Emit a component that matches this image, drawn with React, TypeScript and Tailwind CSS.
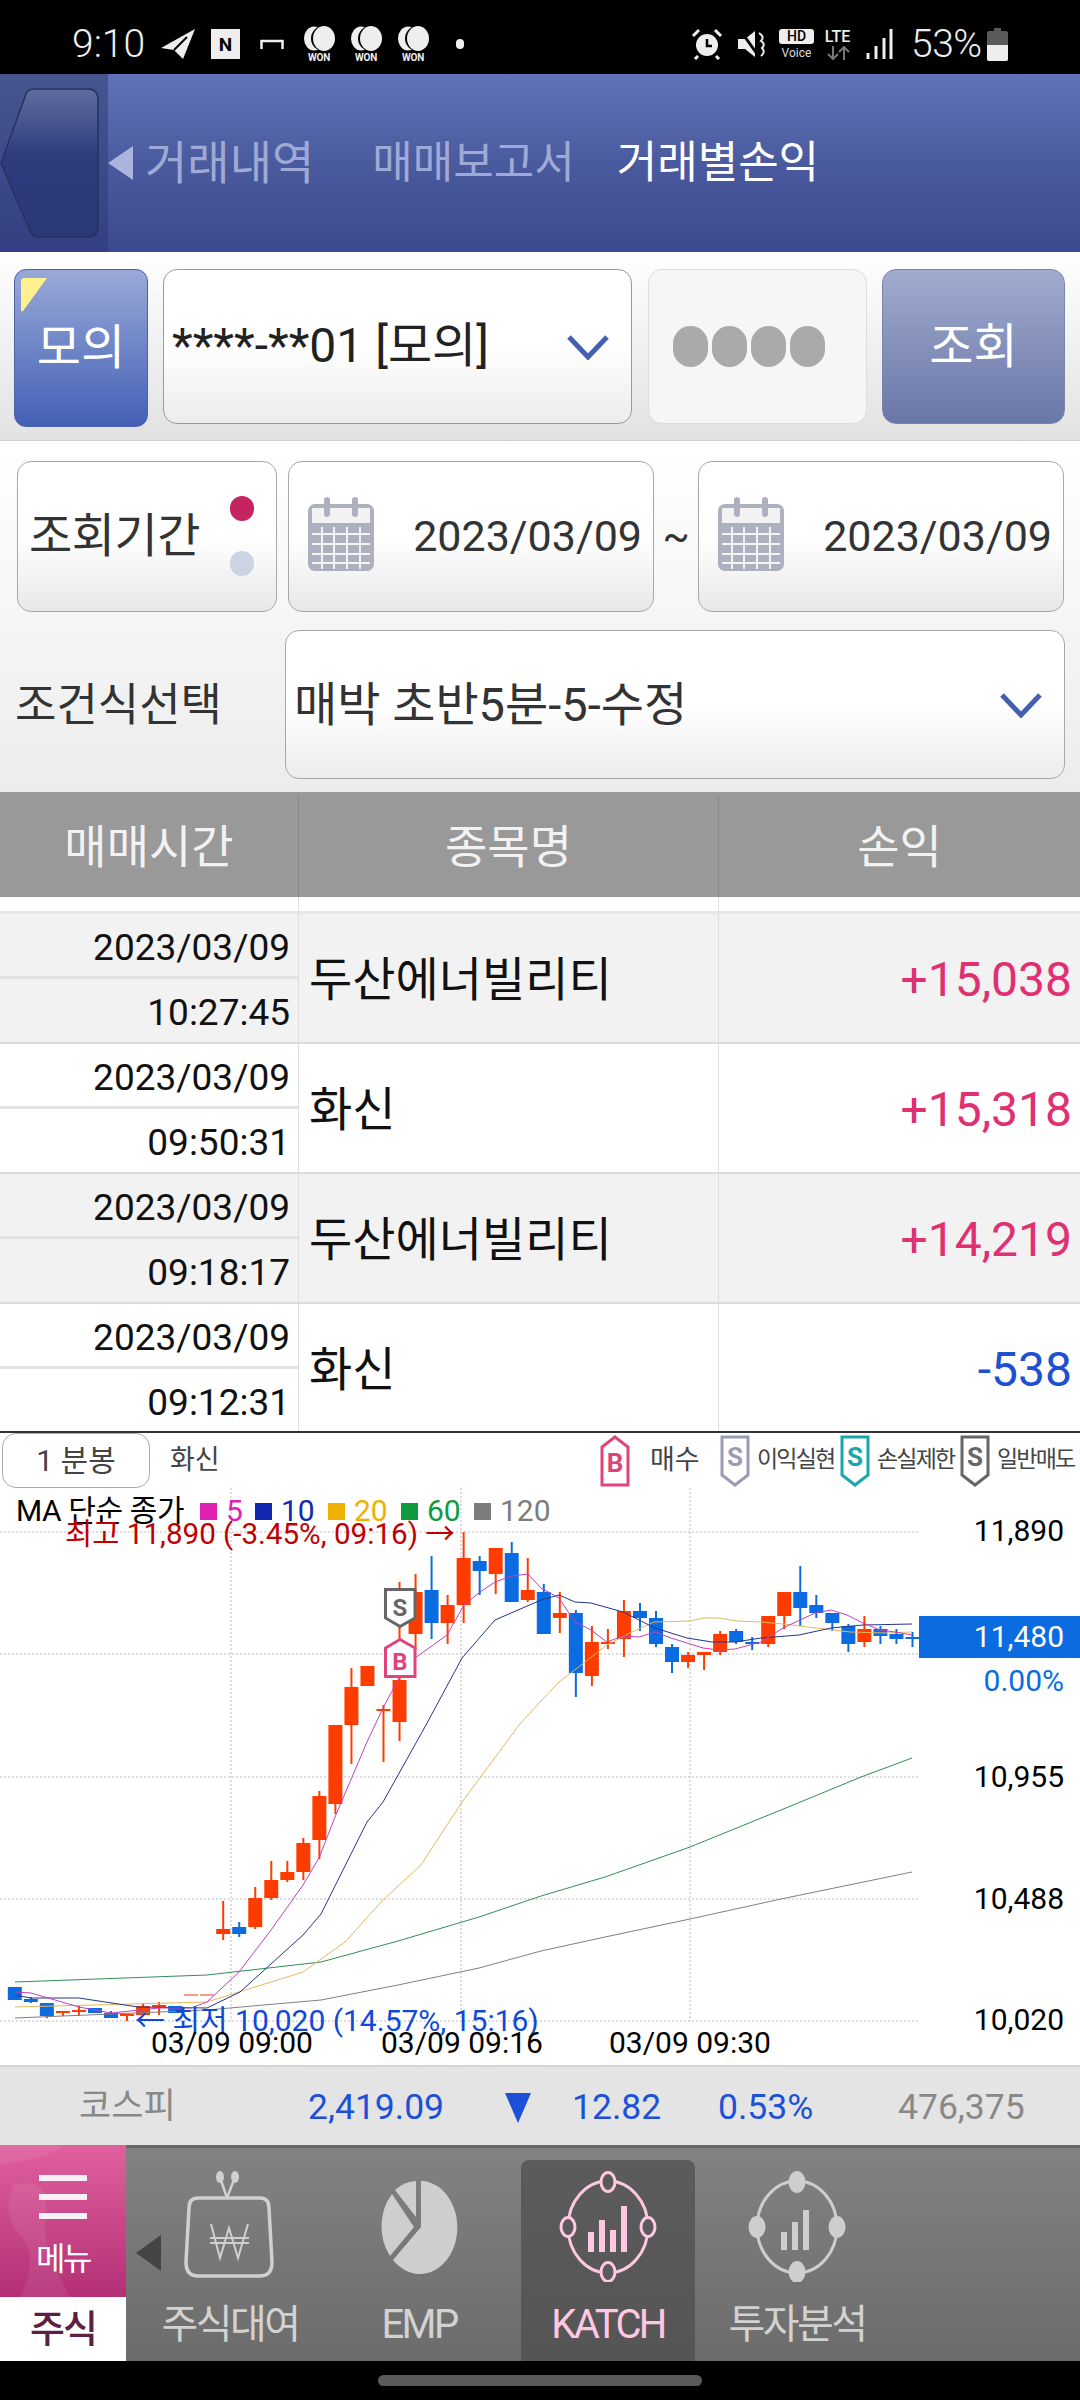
import React from "react";

type C = [number, number, number, number, number, "r" | "b"]; // n, bodyTop, bodyBottom, wickTop, wickBottom, color
const candles: C[] = [
  [0, 1987, 2000, 1987, 2000, "b"], [1, 1999, 2002, 1997, 2003, "b"], [2, 2003, 2016, 2003, 2018, "b"], [3, 2011, 2013, 2011, 2016, "r"],
  [4, 2010, 2012, 2006, 2016, "r"], [5, 2008, 2013, 2008, 2013, "b"], [6, 2013, 2018, 2011, 2018, "b"], [7, 2014, 2016, 2014, 2021, "r"],
  [8, 2006, 2015, 2003, 2015, "r"], [9, 2005, 2006, 2002, 2015, "r"], [10, 2006, 2013, 2006, 2013, "b"],
  [13, 1929, 1934, 1901, 1940, "r"], [14, 1927, 1934, 1922, 1937, "b"], [15, 1898, 1927, 1887, 1929, "r"], [16, 1880, 1898, 1861, 1900, "r"],
  [17, 1872, 1880, 1861, 1882, "r"], [18, 1843, 1872, 1838, 1880, "r"], [19, 1796, 1840, 1791, 1859, "r"], [20, 1725, 1804, 1725, 1814, "r"],
  [21, 1687, 1725, 1668, 1764, "r"], [22, 1666, 1686, 1666, 1686, "r"], [23, 1709, 1711, 1705, 1762, "r"], [24, 1680, 1722, 1582, 1741, "r"],
  [25, 1592, 1634, 1574, 1650, "r"], [26, 1590, 1623, 1556, 1639, "b"], [27, 1605, 1623, 1595, 1644, "r"], [28, 1558, 1605, 1532, 1623, "r"],
  [29, 1561, 1571, 1556, 1595, "b"], [30, 1548, 1574, 1548, 1594, "r"], [31, 1553, 1602, 1542, 1602, "b"], [32, 1590, 1600, 1558, 1602, "r"],
  [33, 1592, 1634, 1584, 1634, "b"], [34, 1613, 1618, 1592, 1633, "r"], [35, 1613, 1673, 1610, 1697, "b"], [36, 1642, 1676, 1626, 1686, "r"],
  [37, 1642, 1643, 1629, 1649, "r"], [38, 1611, 1639, 1600, 1657, "r"], [39, 1611, 1618, 1603, 1631, "b"], [40, 1618, 1644, 1611, 1647, "b"],
  [41, 1647, 1662, 1644, 1673, "b"], [42, 1655, 1662, 1652, 1668, "r"], [43, 1652, 1655, 1652, 1670, "r"], [44, 1634, 1652, 1631, 1655, "r"],
  [45, 1631, 1642, 1629, 1644, "b"], [46, 1642, 1644, 1637, 1650, "b"], [47, 1616, 1644, 1616, 1647, "r"], [48, 1592, 1616, 1592, 1629, "r"],
  [49, 1592, 1608, 1566, 1626, "b"], [50, 1605, 1613, 1595, 1618, "b"], [51, 1613, 1623, 1613, 1631, "b"], [52, 1626, 1644, 1624, 1652, "b"],
  [53, 1629, 1642, 1616, 1647, "r"], [54, 1629, 1636, 1626, 1644, "b"], [55, 1634, 1639, 1629, 1644, "b"], [56, 1637, 1638, 1632, 1647, "b"],
];

const ma60 = "15,1982 207,1975 321,1962 398,1941 479,1917 541,1896 605,1877 690,1847 781,1810 861,1777 912,1758";
const ma120 = "15,2018 207,2010 321,2000 398,1985 479,1968 541,1951 605,1937 690,1919 781,1899 912,1872";
const ma20 = "15,2007 207,2002 303,1972 345,1942 383,1900 421,1865 462,1802 497,1755 519,1725 541,1701 559,1682 607,1645 630,1633 654,1622 690,1621 704,1618 719,1618 737,1621 761,1622 783,1624 816,1628 850,1632 885,1633 912,1632";
const ma10 = "15,1995 31,1998 79,1998 138,2007 207,2008 240,1992 303,1935 321,1914 367,1822 383,1802 426,1725 462,1658 495,1620 541,1600 559,1595 575,1602 591,1603 623,1612 655,1628 687,1638 712,1642 735,1642 761,1638 799,1635 831,1628 863,1625 912,1624";
const ma5 = "15,1992 31,1993 79,2007 111,2013 159,2008 191,2008 207,2002 239,1972 271,1930 303,1885 319,1858 335,1817 367,1742 383,1708 399,1678 415,1658 447,1635 464,1605 480,1592 495,1582 512,1576 528,1574 541,1588 559,1598 575,1622 591,1630 607,1642 623,1636 639,1637 655,1632 671,1638 703,1648 719,1650 735,1649 761,1642 783,1628 815,1613 831,1610 847,1615 863,1623 880,1630 895,1632 912,1635";

function Chevron() {
  return (
    <svg width="44" height="26" viewBox="0 0 44 26" className="shrink-0">
      <path d="M3 3 L22 23 L41 3" fill="none" stroke="#4560ae" strokeWidth="5" />
    </svg>
  );
}

function Calendar() {
  return (
    <svg width="66" height="74" viewBox="0 0 66 74" className="shrink-0">
      <rect x="0" y="7" width="66" height="67" rx="7" fill="#adb1bf" />
      <rect x="4" y="11" width="58" height="15" fill="#f2f2f2" />
      <rect x="16" y="0" width="6" height="20" rx="3" fill="#adb1bf" />
      <rect x="44" y="0" width="6" height="20" rx="3" fill="#adb1bf" />
      <path d="M4 37H62M4 47H62M4 57H62M4 66H62M14 30V72M26 30V72M39 30V72M52 30V72" stroke="#f4f4f4" strokeWidth="2" />
    </svg>
  );
}

function Won() {
  return (
    <div className="flex flex-col items-center w-[32px] shrink-0">
      <svg width="32" height="25" viewBox="0 0 32 25">
        <ellipse cx="11" cy="12.5" rx="10" ry="12" fill="#eee" />
        <ellipse cx="20" cy="12.5" rx="12" ry="12.5" fill="#000" />
        <ellipse cx="21" cy="12.5" rx="11" ry="12.5" fill="#eee" />
      </svg>
      <span className="text-[10px] leading-[10px] font-bold text-[#eee] mt-[2px] tracking-[-0.3px]">WON</span>
    </div>
  );
}

function Marker({ kind, color }: { kind: "B" | "S"; color: string }) {
  const d = kind === "B" ? "M15 2 L28 12 V50 H2 V12 Z" : "M2 2 H28 V40 L15 50 L2 40 Z";
  return (
    <svg width="30" height="52" viewBox="0 0 30 52" className="shrink-0">
      <path d={d} fill="#fff" stroke={color} strokeWidth="3" />
      <text x="15" y={kind === "B" ? 37 : 31} textAnchor="middle" fontSize="26" fontWeight="700" fill={color} fontFamily="Roboto, sans-serif">{kind}</text>
    </svg>
  );
}

function Swatch({ color, label, cls, box }: { color: string; label: string; cls: string; box: string }) {
  return (
    <div className={`flex items-center gap-[9px] ${box}`}>
      <span className={`w-[17px] h-[17px] shrink-0 ${cls}`} />
      <span style={{ color }}>{label}</span>
    </div>
  );
}

function Row({ date, time, name, val, alt, blue }: { date: string; time: string; name: string; val: string; alt?: boolean; blue?: boolean }) {
  return (
    <div className={`grid grid-cols-[299px_420px_361px] h-[130px] border-b-[2px] border-[#dcdcdc] ${alt ? "bg-[#f2f2f2]" : "bg-white"}`}>
      <div className="flex flex-col border-r border-[#dddddd] text-[37px] text-[#111] text-right">
        <div className="h-[65px] leading-[68px] pr-[8px] border-b-[3px] border-[#e2e2e2]">{date}</div>
        <div className="h-[63px] leading-[68px] pr-[8px]">{time}</div>
      </div>
      <div className="flex items-center pl-[10px] pt-[5px] text-[47px] text-[#111] border-r border-[#dddddd]">{name}</div>
      <div className={`flex items-center justify-end pr-[8px] pt-[4px] text-[48px] ${blue ? "text-[#2050d0]" : "text-[#e03072]"}`}>{val}</div>
    </div>
  );
}

function NavItem({ label, active, children }: { label: string; active?: boolean; children: React.ReactNode }) {
  return (
    <div className={`w-[174px] h-[201px] flex flex-col items-center rounded-t-[8px] pt-[10px] ${active ? "bg-gradient-to-b from-[#5c5c5c] to-[#555555]" : ""}`}>
      <svg width="120" height="112" viewBox="0 0 120 112">{children}</svg>
      <span className={`mt-[14px] text-[40px] leading-[58px] tracking-[-2.6px] ${active ? "text-[#ffc8e2]" : "text-[#d2d2d2]"}`}>{label}</span>
    </div>
  );
}

function Ring({ color, filled }: { color: string; filled?: boolean }) {
  const nodes: [number, number][] = [[60, 12], [60, 102], [20, 57], [100, 57]];
  return (
    <>
      <ellipse cx="60" cy="57" rx="40" ry="46" fill="none" stroke={color} strokeWidth="3" />
      {nodes.map(([x, y], i) => (
        <ellipse key={i} cx={x} cy={y} rx="7" ry="9.5" fill={filled ? color : "#5a5a5a"} stroke={color} strokeWidth="3" />
      ))}
    </>
  );
}

export default function App() {
  return (
    <div className="w-[1080px] h-[2400px] flex flex-col bg-white overflow-hidden font-['Roboto','Noto_Sans_CJK_KR',sans-serif]">
      {/* status bar */}
      <div className="h-[74px] bg-black flex items-center shrink-0 text-[#eeeeee] pt-[14px]">
        <span className="ml-[72px] w-[75px] text-[39px] font-light leading-none">9:10</span>
        <svg width="34" height="30" viewBox="0 0 34 30" className="ml-[14px]"><path d="M34 0 L0 19 L13 21 L22 30 Z" fill="#eee" /><path d="M26 8 L13 21" stroke="#000" strokeWidth="2" /></svg>
        <span className="ml-[16px] w-[29px] h-[30px] bg-[#eee] text-black text-[19px] font-bold flex items-center justify-center leading-none">N</span>
        <svg width="24" height="10" viewBox="0 0 24 10" className="ml-[20px]"><path d="M1.5 10V2H22.5V10" fill="none" stroke="#eee" strokeWidth="2.5" /></svg>
        <div className="ml-[19px] flex gap-[15px]"><Won /><Won /><Won /></div>
        <span className="ml-[27px] w-[8px] h-[10px] rounded-full bg-[#eee]" />
        <svg width="32" height="32" viewBox="0 0 32 32" className="ml-[227px]"><circle cx="16" cy="17" r="11" fill="#eee" /><path d="M16 11V18H21" stroke="#000" strokeWidth="2.5" fill="none" /><path d="M2 8 L8 2M30 8 L24 2M7 28 L4 31M25 28 L28 31" stroke="#eee" strokeWidth="3" /></svg>
        <svg width="30" height="30" viewBox="0 0 30 30" className="ml-[15px]"><path d="M0 10H7L17 2V28L7 20H0Z" fill="#eee" /><path d="M2 1 L22 29" stroke="#000" strokeWidth="3" /><path d="M21 4Q27 8 23 12Q28 15 24 19Q28 23 23 27" fill="none" stroke="#eee" strokeWidth="2" /></svg>
        <div className="ml-[11px] w-[35px] flex flex-col items-center">
          <span className="w-[35px] h-[15px] bg-[#eee] text-black rounded-[3px] text-[14px] leading-[15px] text-center font-medium">HD</span>
          <span className="text-[12px] leading-[14px] mt-[2px] text-[#ddd]">Voice</span>
        </div>
        <div className="ml-[8px] w-[31px] flex flex-col items-center">
          <span className="text-[16px] leading-[15px] font-medium">LTE</span>
          <svg width="24" height="14" viewBox="0 0 24 14" className="mt-[2px]"><path d="M7 0V13M2 8L7 13L12 8" stroke="#777" strokeWidth="2" fill="none" /><path d="M18 14V1M13 6L18 1L23 6" stroke="#777" strokeWidth="2" fill="none" /></svg>
        </div>
        <svg width="27" height="30" viewBox="0 0 27 30" className="ml-[13px]"><path d="M2 24V30M10 17V30M18 9V30M25 0V30" stroke="#eee" strokeWidth="3" /></svg>
        <span className="ml-[18px] w-[70px] text-[39px] font-light leading-none tracking-[-0.5px]">53%</span>
        <svg width="21" height="33" viewBox="0 0 21 33" className="ml-[6px]"><path d="M7 0H14V3H19Q21 3 21 5V31Q21 33 19 33H2Q0 33 0 31V5Q0 3 2 3H7Z" fill="#5a5a5a" /><path d="M0 17H21V31Q21 33 19 33H2Q0 33 0 31Z" fill="#eee" /></svg>
      </div>

      {/* header */}
      <div className="h-[178px] shrink-0 flex bg-gradient-to-b from-[#6072b9] via-[#4a5a9e] to-[#3b4a8c]">
        <div className="w-[108px] h-full flex items-center bg-gradient-to-b from-[#46568f] to-[#333f82]">
          <svg width="100" height="150" viewBox="0 0 100 150">
            <defs>
              <linearGradient id="bk" x1="0" y1="0" x2="0" y2="1"><stop offset="0" stopColor="#5f6c9f" /><stop offset="0.45" stopColor="#2e3c7e" /><stop offset="1" stopColor="#2a3876" /></linearGradient>
            </defs>
            <path d="M1 75 L26 6 Q28 1 34 1 H88 Q98 1 98 12 V138 Q98 149 88 149 H38 Q32 149 30 143 Z" fill="url(#bk)" stroke="#27315f" strokeWidth="1.5" />
          </svg>
        </div>
        <div className="flex items-center h-full text-[#9fa9d5] whitespace-nowrap">
          <span className="w-0 h-0 border-y-[17px] border-y-transparent border-r-[25px] border-r-[#aab4dc]" />
          <span className="ml-[12px] text-[46px] leading-none">거래내역</span>
          <span className="ml-[58px] text-[44px] leading-none">매매보고서</span>
          <span className="ml-[42px] text-[44px] leading-none text-white">거래별손익</span>
        </div>
      </div>

      {/* account row */}
      <div className="h-[189px] shrink-0 border-b border-[#cfcfcf] bg-gradient-to-b from-white to-[#e2e2e2] pl-[14px] pr-[15px] pt-[17px] flex">
        <div className="relative w-[134px] h-[158px] rounded-[12px] bg-gradient-to-b from-[#9aa9d8] to-[#4460b4] border border-[#4a62ae] flex items-center justify-center text-white text-[48px]">
          <svg width="28" height="36" viewBox="0 0 28 36" className="absolute left-[5px] top-[7px]"><path d="M1 5 Q1 1 4 1 H27 L3 34 Q1 36 1 32 Z" fill="#fff28e" /></svg>
          모의
        </div>
        <div className="ml-[15px] w-[469px] h-[155px] rounded-[14px] border border-[#9a9a9a] bg-gradient-to-b from-white via-white to-[#ececec] flex items-center justify-between pl-[8px] pr-[21px] text-[#222] text-[48px]">
          <span className="-mt-[2px] whitespace-nowrap">****-**01 [모의]</span>
          <Chevron />
        </div>
        <div className="ml-[16px] w-[219px] h-[155px] rounded-[14px] border border-[#dddddd] bg-[#f6f6f6] flex items-center pl-[24px]">
          {[0, 1, 2, 3].map((i) => (
            <span key={i} className="w-[35px] h-[41px] mr-[4px] rounded-full bg-[#aaaaaa] shrink-0" />
          ))}
        </div>
        <div className="ml-[15px] w-[183px] h-[155px] rounded-[14px] border border-[#7c84ab] bg-gradient-to-b from-[#a2acd0] to-[#6a76a6] flex items-center justify-center text-white text-[48px]">조회</div>
      </div>

      {/* filter section */}
      <div className="h-[354px] shrink-0 bg-gradient-to-b from-white to-[#ececec] border-b-[3px] border-[#9a9a9a]">
        <div className="flex pl-[17px] pt-[20px] h-[170px]">
          <div className="relative w-[260px] h-[151px] rounded-[14px] border border-[#a8a8a8] bg-gradient-to-b from-white via-white to-[#e8e8e8] flex items-center pl-[11px] text-[47px] text-[#333]">
            <span className="tracking-[-0.5px] whitespace-nowrap">조회기간</span>
            <span className="absolute left-[212px] top-[34px] w-[24px] h-[25px] rounded-full bg-[#c4245f]" />
            <span className="absolute left-[212px] top-[89px] w-[24px] h-[25px] rounded-full bg-[#ccd4e4]" />
          </div>
          <div className="ml-[11px] w-[366px] h-[151px] rounded-[14px] border border-[#a8a8a8] bg-gradient-to-b from-white via-white to-[#e8e8e8] flex items-center justify-between pl-[19px] pr-[11px] text-[43px] text-[#333]">
            <span className="-mt-[6px]"><Calendar /></span><span className="-mt-[1px]">2023/03/09</span>
          </div>
          <span className="w-[44px] h-[151px] flex items-center justify-center text-[40px] text-[#333]">~</span>
          <div className="w-[366px] h-[151px] rounded-[14px] border border-[#a8a8a8] bg-gradient-to-b from-white via-white to-[#e8e8e8] flex items-center justify-between pl-[19px] pr-[11px] text-[43px] text-[#333]">
            <span className="-mt-[6px]"><Calendar /></span><span className="-mt-[1px]">2023/03/09</span>
          </div>
        </div>
        <div className="flex items-center h-[149px] mt-[19px]">
          <span className="ml-[15px] w-[270px] text-[45px] text-[#333] whitespace-nowrap pt-[2px]">조건식선택</span>
          <div className="w-[780px] h-[149px] rounded-[14px] border border-[#a8a8a8] bg-gradient-to-b from-white via-white to-[#ececec] flex items-center justify-between pl-[8px] pr-[21px] text-[47px] text-[#333]">
            <span className="whitespace-nowrap pt-[2px]">매박 초반5분-5-수정</span>
            <Chevron />
          </div>
        </div>
      </div>

      {/* table header */}
      <div className="h-[102px] shrink-0 grid grid-cols-[299px_420px_361px] bg-[#999999] text-[#f2f2f2] text-[46px] text-center leading-[104px]">
        <div className="border-r border-[#888888]">매매시간</div>
        <div className="border-r border-[#888888]">종목명</div>
        <div>손익</div>
      </div>
      <div className="h-[17px] shrink-0 grid grid-cols-[299px_420px_361px] border-b-[3px] border-[#e6e6e6]">
        <div className="border-r border-[#dddddd]" />
        <div className="border-r border-[#dddddd]" />
      </div>
      <div className="h-[517px] shrink-0 overflow-hidden">
        <Row alt date="2023/03/09" time="10:27:45" name="두산에너빌리티" val="+15,038" />
        <Row date="2023/03/09" time="09:50:31" name="화신" val="+15,318" />
        <Row alt date="2023/03/09" time="09:18:17" name="두산에너빌리티" val="+14,219" />
        <Row blue date="2023/03/09" time="09:12:31" name="화신" val="-538" />
      </div>

      {/* chart */}
      <div className="relative h-[634px] shrink-0 border-t-[2px] border-[#333333] bg-white">
        <svg width="1080" height="632" viewBox="0 1433 1080 632" className="absolute left-0 top-0">
          {[1532, 1654, 1777, 1899, 2021].map((y) => (
            <line key={y} x1="0" x2="919" y1={y} y2={y} stroke="#bbbbbb" strokeWidth="1" strokeDasharray="2 2" />
          ))}
          {[231, 461, 690].map((x) => (
            <line key={x} x1={x} x2={x} y1="1488" y2="2021" stroke="#bbbbbb" strokeWidth="1" strokeDasharray="2 2" />
          ))}
          <path d="M184 1995H198M200 1995H214" stroke="#f08060" strokeWidth="1.5" />
          {candles.map(([n, t, b, wt, wb, c]) => {
            const x = 14.8 + 16.03 * n;
            const col = c === "r" ? "#ff3c00" : "#0a6ce0";
            return (
              <g key={n}>
                <line x1={x} x2={x} y1={wt} y2={wb} stroke={col} strokeWidth="2" />
                <rect x={x - 7} y={t} width="14" height={Math.max(b - t, 2)} fill={col} />
              </g>
            );
          })}
          <polyline points={ma120} fill="none" stroke="#808080" strokeWidth="1" />
          <polyline points={ma60} fill="none" stroke="#2f8f55" strokeWidth="1" />
          <polyline points={ma20} fill="none" stroke="#e4b860" strokeWidth="1" />
          <polyline points={ma10} fill="none" stroke="#28348c" strokeWidth="1" />
          <polyline points={ma5} fill="none" stroke="#c040c0" strokeWidth="1" />
          <g transform="translate(384 1588)">
            <path d="M1.5 1.5 H31 V30 L16 38.5 L1.5 30 Z" fill="#fff" stroke="#666666" strokeWidth="3" />
            <text x="16" y="28" textAnchor="middle" fontSize="24" fontWeight="700" fill="#666666" fontFamily="Roboto, sans-serif">S</text>
          </g>
          <g transform="translate(384 1638)">
            <path d="M16 1.5 L31 10 V38.5 H1.5 V10 Z" fill="#fff" stroke="#e0447c" strokeWidth="3" />
            <text x="16" y="32" textAnchor="middle" fontSize="24" fontWeight="700" fill="#e0447c" fontFamily="Roboto, sans-serif">B</text>
          </g>
        </svg>

        {/* toolbar */}
        <div className="relative flex items-center h-[55px] whitespace-nowrap">
          <div className="ml-[2px] w-[148px] h-[55px] rounded-[14px] border border-[#aaaaaa] bg-white flex items-center justify-center text-[30px] text-[#444]">1 분봉</div>
          <span className="ml-[20px] w-[50px] text-[27px] text-[#444]">화신</span>
          <div className="ml-[380px]"><Marker kind="B" color="#e0447c" /></div>
          <span className="ml-[20px] w-[50px] text-[27px] text-[#444]">매수</span>
          <div className="ml-[20px]"><Marker kind="S" color="#9a9cb4" /></div>
          <span className="ml-[7px] w-[78px] text-[23px] tracking-[-1.8px] text-[#444]">이익실현</span>
          <div className="ml-[5px]"><Marker kind="S" color="#18a8ac" /></div>
          <span className="ml-[7px] w-[78px] text-[23px] tracking-[-1.8px] text-[#444]">손실제한</span>
          <div className="ml-[5px]"><Marker kind="S" color="#666666" /></div>
          <span className="ml-[7px] w-[78px] text-[23px] tracking-[-1.8px] text-[#444]">일반매도</span>
        </div>
        {/* MA legend */}
        <div className="relative flex items-center h-[46px] pl-[16px] text-[30px] leading-none whitespace-nowrap">
          <span className="w-[184px] text-black text-[30px] tracking-[-0.4px]">MA 단순 종가</span>
          <Swatch color="#e020b0" cls="bg-[#e020b0]" box="w-[55px]" label="5" />
          <Swatch color="#1028b0" cls="bg-[#1028b0]" box="w-[73px]" label="10" />
          <Swatch color="#f0b000" cls="bg-[#f0b000]" box="w-[73px]" label="20" />
          <Swatch color="#109a40" cls="bg-[#109a40]" box="w-[73px]" label="60" />
          <Swatch color="#7c7c7c" cls="bg-[#7c7c7c]" box="w-[73px]" label="120" />
        </div>

        {/* labels */}
        <span className="absolute left-[65px] top-[83px] text-[29.6px] leading-[36px] text-[#c00000] whitespace-nowrap">최고 11,890 (-3.45%, 09:16) →</span>
        <span className="absolute left-[135px] top-[570px] text-[30px] leading-[36px] text-[#1048d8] whitespace-nowrap">← 최저 10,020 (14.57%, 15:16)</span>
        <span className="absolute left-[151px] top-[592px] text-[30px] leading-[36px] text-black whitespace-nowrap">03/09 09:00</span>
        <span className="absolute left-[381px] top-[592px] text-[30px] leading-[36px] text-black whitespace-nowrap">03/09 09:16</span>
        <span className="absolute left-[609px] top-[592px] text-[30px] leading-[36px] text-black whitespace-nowrap">03/09 09:30</span>
        <span className="absolute right-[16px] top-[80px] text-[30px] leading-[36px] text-black">11,890</span>
        <div className="absolute left-[919px] right-0 top-[183px] h-[42px] bg-[#0a6ce0] text-white text-[30px] leading-[42px] text-right pr-[16px]">11,480</div>
        <span className="absolute right-[16px] top-[230px] text-[30px] leading-[36px] text-[#0a6ce0]">0.00%</span>
        <span className="absolute right-[16px] top-[326px] text-[30px] leading-[36px] text-black">10,955</span>
        <span className="absolute right-[16px] top-[448px] text-[30px] leading-[36px] text-black">10,488</span>
        <span className="absolute right-[16px] top-[569px] text-[30px] leading-[36px] text-black">10,020</span>
      </div>

      {/* index bar */}
      <div className="h-[80px] shrink-0 bg-[#e4e4e4] border-t-[2px] border-[#d4d4d4] flex items-center pt-[3px] text-[35.5px] text-[#1c50d8] whitespace-nowrap">
        <span className="ml-[79px] w-[229px] text-[35px] text-[#888888]">코스피</span>
        <span className="w-[197px]">2,419.09</span>
        <svg width="26" height="30" viewBox="0 0 26 30" className="shrink-0"><path d="M0 0H26L13 30Z" fill="#1c50d8" /></svg>
        <span className="ml-[41px] w-[146px]">12.82</span>
        <span className="w-[180px]">0.53%</span>
        <span className="text-[#888888]">476,375</span>
      </div>

      {/* bottom nav */}
      <div className="relative h-[216px] shrink-0 flex bg-gradient-to-b from-[#828282] to-[#6c6c6c] border-t-[3px] border-[#686868]">
        <div className="w-[126px] shrink-0 flex flex-col -mt-[3px]">
          <div className="relative h-[152px] bg-gradient-to-b from-[#e0609e] to-[#b42e76] flex flex-col items-center overflow-hidden">
            <svg width="126" height="152" viewBox="0 0 126 152" className="absolute left-0 top-0">
              <path d="M0 20 Q60 10 62 0 L0 0Z M14 40 Q50 30 46 70 Q40 100 70 152 L20 152 Q40 110 20 90 Q0 70 14 40Z" fill="#ffffff" fillOpacity="0.07" />
            </svg>
            <span className="relative mt-[30px] w-[48px] h-[6px] bg-[#f8f0f4]" />
            <span className="relative mt-[13px] w-[48px] h-[6px] bg-[#f8f0f4]" />
            <span className="relative mt-[13px] w-[48px] h-[6px] bg-[#f8f0f4]" />
            <span className="relative mt-[22px] text-[32px] leading-[36px] text-white tracking-[-2.5px]">메뉴</span>
          </div>
          <div className="h-[64px] bg-white flex items-center justify-center text-[38px] text-[#5c2044] font-medium tracking-[-2px]">주식</div>
        </div>
        <span className="absolute left-[136px] top-[87px] w-0 h-0 border-y-[18px] border-y-transparent border-r-[25px] border-r-[#444444]" />
        <div className="flex gap-[15px] ml-[17px] pt-[12px]">
          <NavItem label="주식대여">
            <path d="M50 7 L57 28M65 7 L57 28" stroke="#d0d0d0" strokeWidth="2.5" />
            <ellipse cx="50" cy="7" rx="4" ry="6" fill="#d0d0d0" />
            <ellipse cx="65" cy="7" rx="4" ry="6" fill="#d0d0d0" />
            <path d="M28 28 H90 Q99 28 99 38 L102 92 Q102 106 90 106 H28 Q16 106 16 92 L19 38 Q19 28 28 28 Z" fill="none" stroke="#d0d0d0" strokeWidth="3.5" />
            <path d="M41 54 L50 88 L59 58 L68 88 L78 54M40 68H79M40 73H79" fill="none" stroke="#d0d0d0" strokeWidth="2" />
          </NavItem>
          <NavItem label="EMP">
            <path d="M62 10.7 A37.5 46.7 0 1 1 34 90 L62 57 Z" fill="#cecece" />
            <path d="M31 86 L55 57 L33 24 A37.5 46.7 0 0 0 31 86 Z" fill="#cecece" />
            <path d="M36 20 A37.5 46.7 0 0 1 57 11 L57 47 Z" fill="#cecece" />
          </NavItem>
          <NavItem label="KATCH" active>
            <Ring color="#ffc8e2" />
            <path d="M40 62H46V82H40ZM51 50H57V82H51ZM62 60H68V82H62ZM73 36H79V82H73Z" fill="#ffc8e2" />
          </NavItem>
          <NavItem label="투자분석">
            <Ring color="#cecece" filled />
            <path d="M44 62H50V80H44ZM55 52H61V80H55ZM66 40H72V80H66Z" fill="#cecece" />
          </NavItem>
        </div>
      </div>

      {/* gesture bar */}
      <div className="flex-1 bg-black flex items-start justify-center pt-[14px]">
        <span className="w-[324px] h-[11px] rounded-full bg-[#5a5a5a]" />
      </div>
    </div>
  );
}
